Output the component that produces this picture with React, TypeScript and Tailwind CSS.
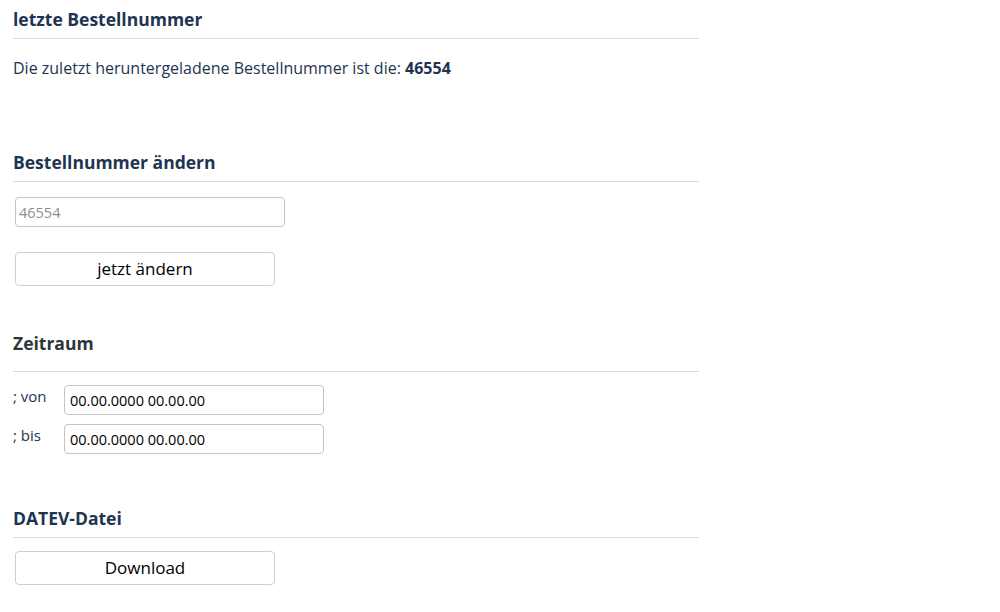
import React from 'react';

const Heading = ({ children, gray }: { children: React.ReactNode; gray?: boolean }) => (
  <div className={`border-b border-[#d9d9d9] ${gray ? 'pb-[18px]' : 'pb-[9px]'}`}>
    <h2 className={`text-[17.5px] font-bold leading-[20px] ${gray ? 'text-[#2e3538]' : 'text-[#1e3450]'}`}>{children}</h2>
  </div>
);

const Btn = ({ children }: { children: React.ReactNode }) => (
  <button className="ml-[2px] w-[260px] h-[34px] rounded-[4px] border border-[#cfcfcf] bg-white text-[17px] text-black">
    {children}
  </button>
);

const DateRow = ({ label }: { label: string }) => (
  <div className="flex items-start">
    <span className="w-[51px] pt-[1px] whitespace-nowrap text-[15px] leading-[20px] text-[#1e3450]">{label}</span>
    <input
      readOnly
      value="00.00.0000 00.00.00"
      className="w-[260px] h-[30px] rounded-[4px] border border-[#c4c4c4] px-[5px] text-[14.5px] text-black outline-none"
    />
  </div>
);

export default function App() {
  return (
    <div className="w-[1000px] h-[612px] bg-white font-['Open_Sans',sans-serif] overflow-hidden">
      <div className="w-[686px] ml-[13px] pt-[9px]">
        <Heading>letzte Bestellnummer</Heading>
        <p className="mt-[18px] text-[16px] leading-[22px] text-[#1e3450]">
          Die zuletzt heruntergeladene Bestellnummer ist die: <b>46554</b>
        </p>

        <div className="mt-[73px]">
          <Heading>Bestellnummer ändern</Heading>
        </div>
        <input
          readOnly
          placeholder="46554"
          className="mt-[15px] ml-[2px] block w-[270px] h-[30px] rounded-[4px] border border-[#c4c4c4] px-[3px] text-[14.5px] placeholder:text-[#8e8e8e] outline-none"
        />
        <div className="mt-[25px]">
          <Btn>jetzt ändern</Btn>
        </div>

        <div className="mt-[47px]">
          <Heading gray>Zeitraum</Heading>
        </div>
        <div className="mt-[13px] flex flex-col gap-[9px]">
          <DateRow label="; von" />
          <DateRow label="; bis" />
        </div>

        <div className="mt-[54px]">
          <Heading>DATEV-Datei</Heading>
        </div>
        <div className="mt-[13px]">
          <Btn>Download</Btn>
        </div>
      </div>
    </div>
  );
}
